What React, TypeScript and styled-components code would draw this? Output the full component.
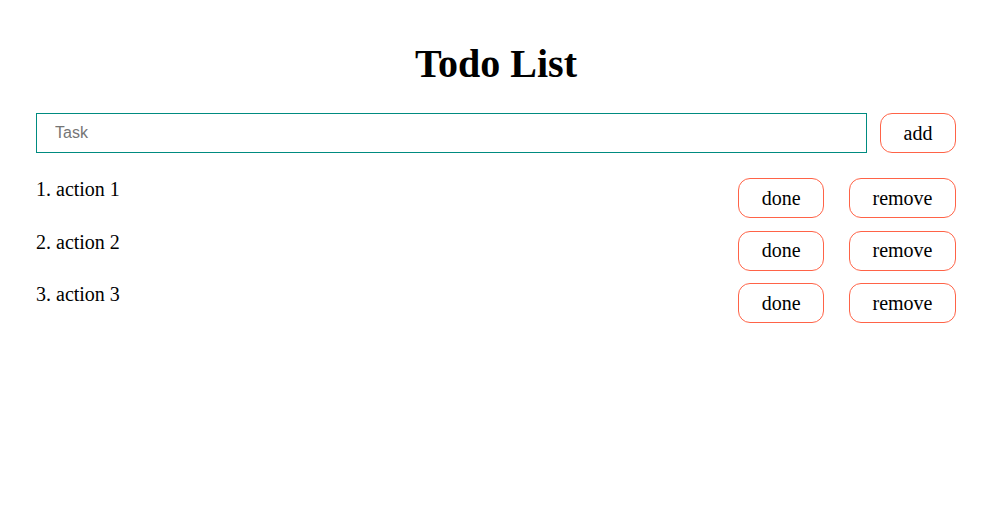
import React from "react";
import styled, { createGlobalStyle } from "styled-components";

const Global = createGlobalStyle`
  html, body { margin: 0; padding: 0; background: #fff; }
  body { font-family: "Liberation Serif", "Times New Roman", serif; color: #000; }
`;

const Page = styled.main`
  width: 920px;
  margin: 0 0 0 36px;
  padding-top: 37px;
`;

const Title = styled.h1`
  margin: 0 0 22px;
  text-align: center;
  font-size: 40px;
  line-height: 54px;
  font-weight: bold;
`;

const Form = styled.form`
  display: flex;
  align-items: center;
  gap: 13px;
  margin-bottom: 25px;
`;

const TaskInput = styled.input`
  flex: 1;
  height: 40px;
  box-sizing: border-box;
  border: 1px solid #008b80;
  padding: 0 18px;
  font-family: "Liberation Sans", Arial, sans-serif;
  font-size: 16px;
  outline: none;
  &::placeholder { color: #757575; }
`;

const Button = styled.button`
  height: 40px;
  box-sizing: border-box;
  padding: 0 22.5px;
  border: 1px solid #ff6347;
  border-radius: 12px;
  background: #fff;
  font-family: "Liberation Serif", "Times New Roman", serif;
  font-size: 20px;
  color: #000;
  cursor: pointer;
`;

const List = styled.ol`
  list-style: none;
  margin: 0;
  padding: 0;
  display: flex;
  flex-direction: column;
  gap: 12.5px;
`;

const Item = styled.li`
  display: flex;
  align-items: flex-start;
  justify-content: space-between;
`;

const Label = styled.span`
  font-size: 20px;
  line-height: 23px;
`;

const Actions = styled.div`
  display: flex;
  gap: 25px;
`;

const tasks = ["action 1", "action 2", "action 3"];

export default function App() {
  return (
    <>
      <Global />
      <Page>
        <Title>Todo List</Title>
        <Form onSubmit={(e) => e.preventDefault()}>
          <TaskInput placeholder="Task" />
          <Button type="submit">add</Button>
        </Form>
        <List>
          {tasks.map((t, i) => (
            <Item key={t}>
              <Label>
                {i + 1}. {t}
              </Label>
              <Actions>
                <Button>done</Button>
                <Button>remove</Button>
              </Actions>
            </Item>
          ))}
        </List>
      </Page>
    </>
  );
}
